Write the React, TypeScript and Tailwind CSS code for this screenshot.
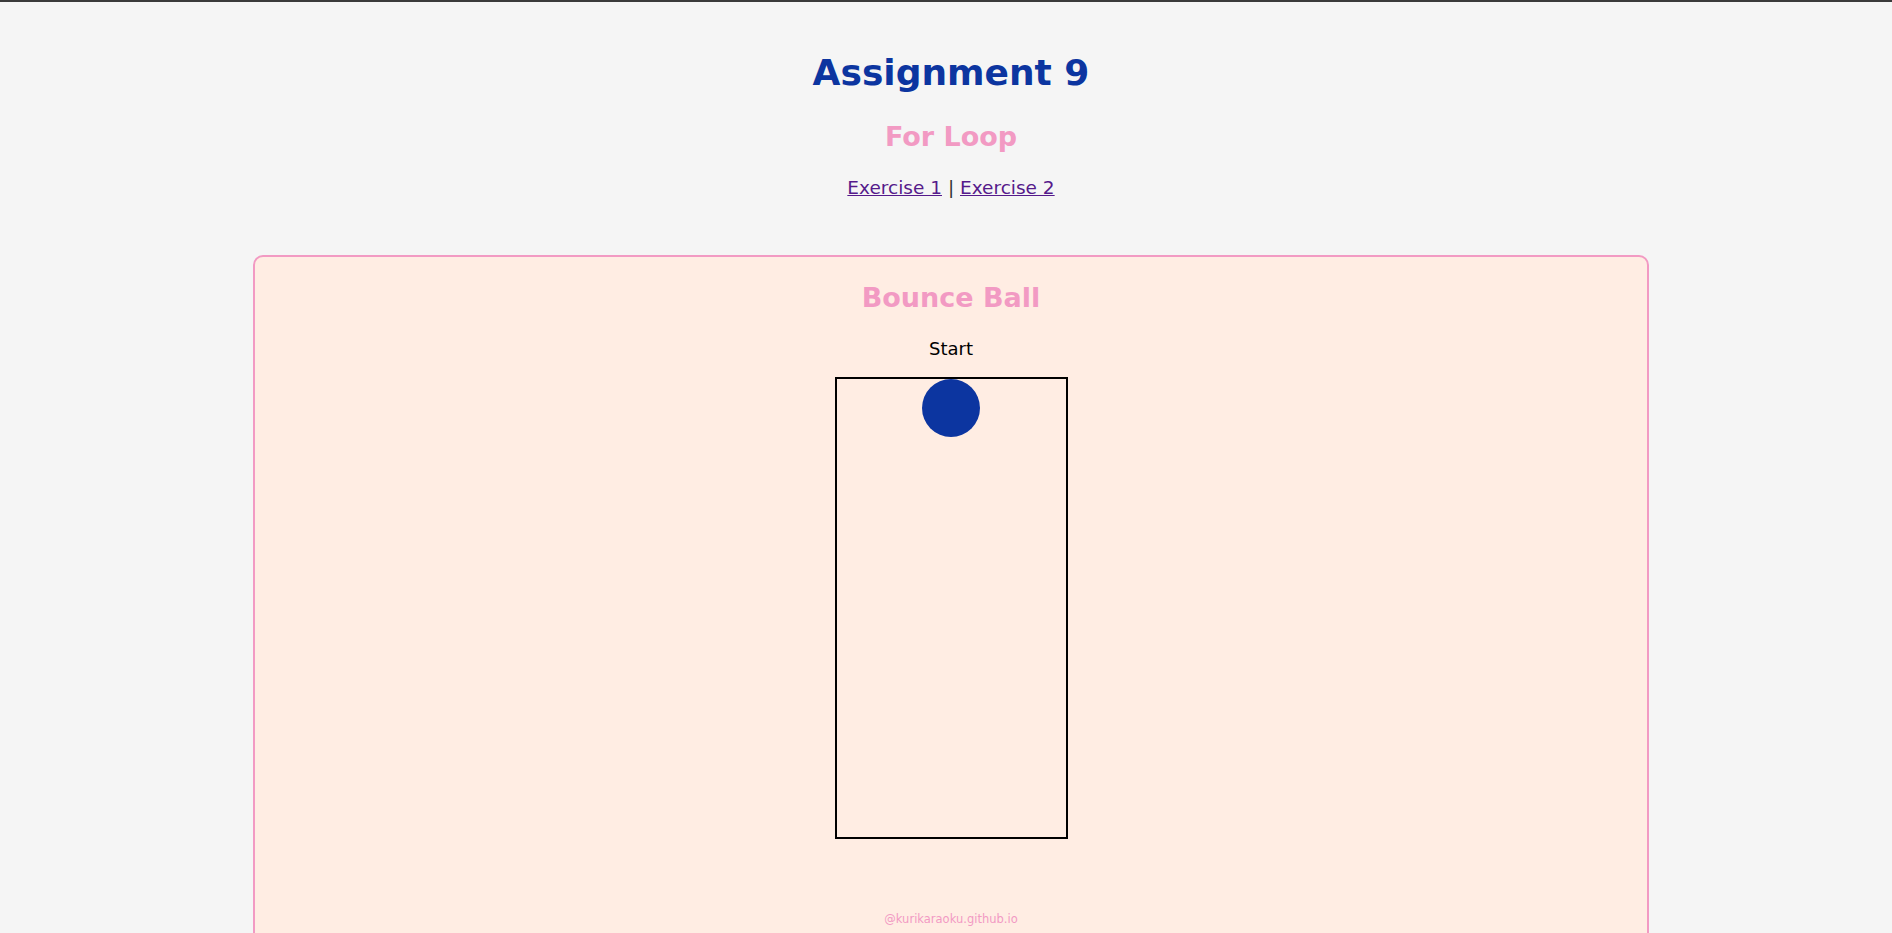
import React from "react";

export default function App() {
	return (
		<div
			className="min-h-screen bg-[#f5f5f5] border-t-2 border-[#3a3a3a] pl-[10px] pt-[50px] text-[#333] overflow-hidden"
			style={{ fontFamily: '"DejaVu Sans", Verdana, sans-serif' }}
		>
			<header className="flex flex-col items-center">
				<h1 className="text-[36px] font-bold leading-[normal] text-[#0c35a0]">
					Assignment 9
				</h1>
				<h2 className="mt-[28px] text-[27px] font-bold leading-[normal] text-[#f29ac3]">
					For Loop
				</h2>
				<nav className="mt-[25px] text-[18.5px] leading-[normal]">
					<a href="#ex1" className="underline text-[#551a8b]">
						Exercise 1
					</a>{" "}
					|{" "}
					<a href="#ex2" className="underline text-[#551a8b]">
						Exercise 2
					</a>
				</nav>
			</header>

			<section className="mx-auto mt-[57px] w-[1396px] h-[700px] rounded-[10px] border-2 border-[#f29ac3] bg-[#ffede3] pt-[25px] flex flex-col items-center">
				<h2 className="text-[27px] font-bold leading-[normal] text-[#f29ac3]">
					Bounce Ball
				</h2>
				<button className="mt-[25px] text-[18px] leading-[normal] text-black cursor-pointer">
					Start
				</button>
				<div className="mt-[18px] w-[233px] h-[462px] border-2 border-black flex justify-center">
					<div className="w-[58px] h-[58px] rounded-full bg-[#0c35a0]" />
				</div>
				<p className="mt-[73px] text-[11.5px] leading-[normal] text-[#f29ac3]">
					@kurikaraoku.github.io
				</p>
			</section>
		</div>
	);
}
